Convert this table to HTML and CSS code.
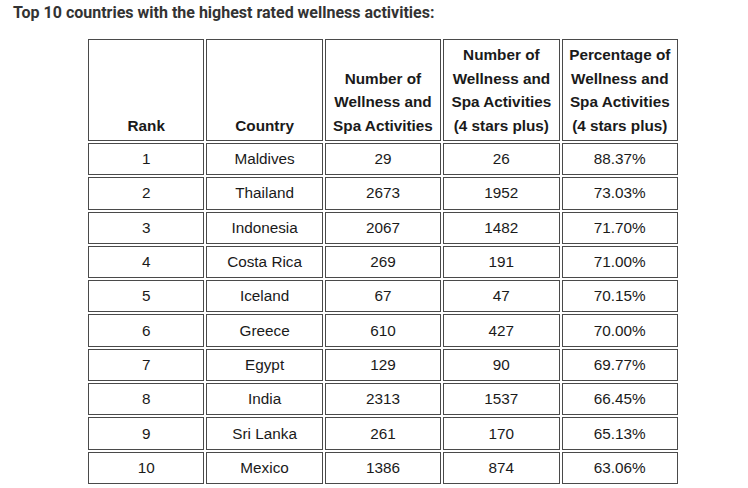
FILE: index.html
```html
<!DOCTYPE html>
<html>
<head>
<meta charset="utf-8">
<link rel="stylesheet" href="styles.css">
</head>
<body>
<div class="page">
  <h2 class="title">Top 10 countries with the highest rated wellness activities:</h2>
  <table class="ranking">
    <thead>
      <tr>
        <th>Rank</th>
        <th>Country</th>
        <th>Number of Wellness and Spa Activities</th>
        <th>Number of Wellness and Spa Activities (4 stars plus)</th>
        <th>Percentage of Wellness and Spa Activities (4 stars plus)</th>
      </tr>
    </thead>
    <tbody>
      <tr><td>1</td><td>Maldives</td><td>29</td><td>26</td><td>88.37%</td></tr>
      <tr><td>2</td><td>Thailand</td><td>2673</td><td>1952</td><td>73.03%</td></tr>
      <tr><td>3</td><td>Indonesia</td><td>2067</td><td>1482</td><td>71.70%</td></tr>
      <tr><td>4</td><td>Costa Rica</td><td>269</td><td>191</td><td>71.00%</td></tr>
      <tr><td>5</td><td>Iceland</td><td>67</td><td>47</td><td>70.15%</td></tr>
      <tr><td>6</td><td>Greece</td><td>610</td><td>427</td><td>70.00%</td></tr>
      <tr><td>7</td><td>Egypt</td><td>129</td><td>90</td><td>69.77%</td></tr>
      <tr><td>8</td><td>India</td><td>2313</td><td>1537</td><td>66.45%</td></tr>
      <tr><td>9</td><td>Sri Lanka</td><td>261</td><td>170</td><td>65.13%</td></tr>
      <tr><td>10</td><td>Mexico</td><td>1386</td><td>874</td><td>63.06%</td></tr>
    </tbody>
  </table>
</div>
</body>
</html>
```

FILE: styles.css
```css
html, body {
  margin: 0;
  padding: 0;
  background: #ffffff;
}

.page {
  padding: 3px 0 0 13px;
}

.title {
  margin: 0;
  font-family: Roboto, "Liberation Sans", sans-serif;
  font-weight: 700;
  font-size: 16px;
  line-height: 19px;
  color: #333333;
}

.ranking {
  margin: 15px 0 0 73px;
  width: 594px;
  table-layout: fixed;
  border-collapse: separate;
  border-spacing: 2px;
  font-family: "Liberation Sans", Arial, sans-serif;
  font-size: 15.3px;
  color: #1a1a1a;
}

.ranking th,
.ranking td {
  border: 1px solid #4a4a4a;
  text-align: center;
}

.ranking th {
  box-sizing: border-box;
  height: 102px;
  padding: 3px 4px 3px;
  vertical-align: bottom;
  font-weight: 700;
  line-height: 23.5px;
}

.ranking td {
  box-sizing: border-box;
  height: 32.3px;
  padding: 0 4px;
  line-height: 30px;
  vertical-align: middle;
}
```
